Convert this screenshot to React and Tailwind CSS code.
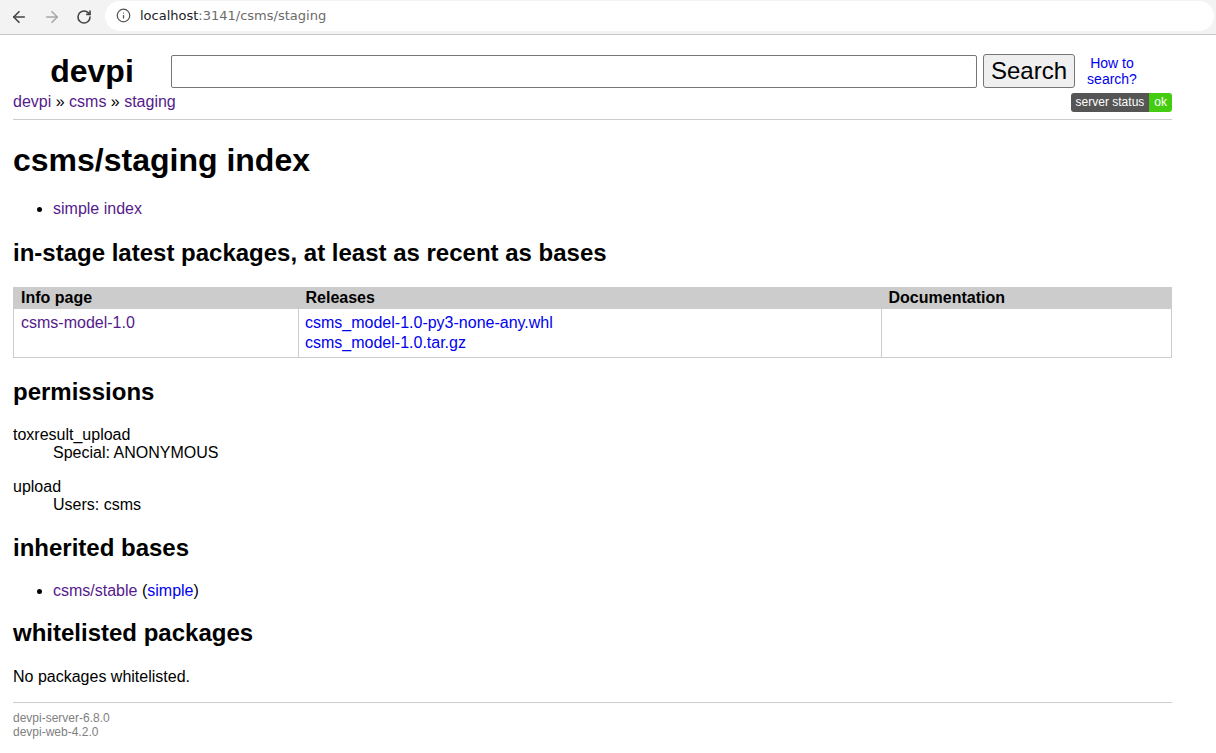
import React from "react";
import { ArrowLeft, ArrowRight, RotateCw, Info } from "lucide-react";

// browser toolbar across the top of the picture
const BrowserBar = () => (
  <div className="flex items-center h-[35px] bg-[#f3f3f3] border-b border-[#c8c8c8]">
    <div className="flex items-center w-[105px] pl-[10px] gap-[15px] text-[#444]">
      <ArrowLeft size={18} strokeWidth={2.2} />
      <ArrowRight size={18} strokeWidth={2.2} className="text-[#a8a8a8]" />
      <RotateCw size={16} strokeWidth={2.4} />
    </div>
    <div className="flex items-center flex-1 h-[30px] mb-[3px] mr-[2px] bg-white rounded-full pl-[11px]">
      <Info size={15} strokeWidth={2} className="text-[#555]" />
      <span className="ml-[9px] text-[13px] font-['DejaVu_Sans',sans-serif] text-[#202124]">
        localhost<span className="text-[#6b6b6b]">:3141/csms/staging</span>
      </span>
    </div>
  </div>
);

const visited = "text-[#551a8b]";
const link = "text-[#0000ee]";

const App = () => {
  return (
    <div className="min-h-screen bg-white font-['Liberation_Sans',Arial,sans-serif] text-black text-[16px]">
      <BrowserBar />

      <div className="ml-[13px] w-[1159px]">
        {/* header */}
        <div className="pt-[19px] flex items-center h-[53px]">
          <div className="w-[158px] text-center text-[32px] font-bold leading-[37px]">devpi</div>
          <input
            type="text"
            className="flex-1 h-[33px] border border-[#767676] rounded-[2px] outline-none"
          />
          <button className="ml-[6px] w-[92px] h-[34px] text-[24px] leading-[28px] bg-[#efefef] border border-[#767676] rounded-[3px]">
            Search
          </button>
          <a className={`ml-[12px] w-[50px] text-center text-[14px] leading-[16px] ${link}`}>
            How to search?
          </a>
          <div className="w-[35px]" />
        </div>

        <div className="mt-[5px] flex justify-between items-start">
          <div className="leading-[18px]">
            <a className={visited}>devpi</a> » <a className={visited}>csms</a> »{" "}
            <a className={visited}>staging</a>
          </div>
          <div className="flex text-[12px] leading-[19px] text-white rounded-[3px] overflow-hidden">
            <span className="bg-[#555] px-[5px]">server status</span>
            <span className="bg-[#4c1] px-[5px]">ok</span>
          </div>
        </div>

        <hr className="mt-[7px] border-t border-[#ccc]" />

        <h1 className="mt-[22px] text-[32px] leading-[37px] font-bold">csms/staging index</h1>

        <ul className="mt-[21px] list-disc pl-[40px] leading-[18px]">
          <li>
            <a className={visited}>simple index</a>
          </li>
        </ul>

        <h2 className="mt-[21px] text-[24px] leading-[28px] font-bold">
          in-stage latest packages, at least as recent as bases
        </h2>

        <table className="mt-[20px] w-full border-collapse border border-[#ccc]">
          <thead>
            <tr className="bg-[#ccc] text-left">
              <th className="w-[285px] px-[7px] py-[1px] leading-[18px] font-bold">Info page</th>
              <th className="w-[583px] px-[7px] py-[1px] leading-[18px] font-bold">Releases</th>
              <th className="px-[7px] py-[1px] leading-[18px] font-bold">Documentation</th>
            </tr>
          </thead>
          <tbody>
            <tr className="align-top leading-[20px]">
              <td className="border border-[#ccc] px-[7px] pt-[4px] pb-[4px]">
                <a className={visited}>csms-model-1.0</a>
              </td>
              <td className="border border-[#ccc] px-[6px] pt-[4px] pb-[4px]">
                <a className={`block ${link}`}>csms_model-1.0-py3-none-any.whl</a>
                <a className={`block ${link}`}>csms_model-1.0.tar.gz</a>
              </td>
              <td className="border border-[#ccc] px-[7px] pt-[4px] pb-[4px]"></td>
            </tr>
          </tbody>
        </table>

        <h2 className="mt-[20px] text-[24px] leading-[28px] font-bold">permissions</h2>

        <dl className="mt-[20px] leading-[18px]">
          <dt>toxresult_upload</dt>
          <dd className="ml-[40px]">Special: ANONYMOUS</dd>
          <dt className="mt-[16px]">upload</dt>
          <dd className="ml-[40px]">Users: csms</dd>
        </dl>

        <h2 className="mt-[20px] text-[24px] leading-[28px] font-bold">inherited bases</h2>

        <ul className="mt-[20px] list-disc pl-[40px] leading-[18px]">
          <li>
            <a className={visited}>csms/stable</a> (<a className={link}>simple</a>)
          </li>
        </ul>

        <h2 className="mt-[19px] text-[24px] leading-[28px] font-bold">whitelisted packages</h2>

        <p className="mt-[21px] leading-[18px]">No packages whitelisted.</p>

        <hr className="mt-[16px] border-t border-[#ccc]" />

        <div className="mt-[8px] text-[12px] leading-[14px] text-[#808080]">
          <div>devpi-server-6.8.0</div>
          <div>devpi-web-4.2.0</div>
        </div>
      </div>
    </div>
  );
};

export default App;
